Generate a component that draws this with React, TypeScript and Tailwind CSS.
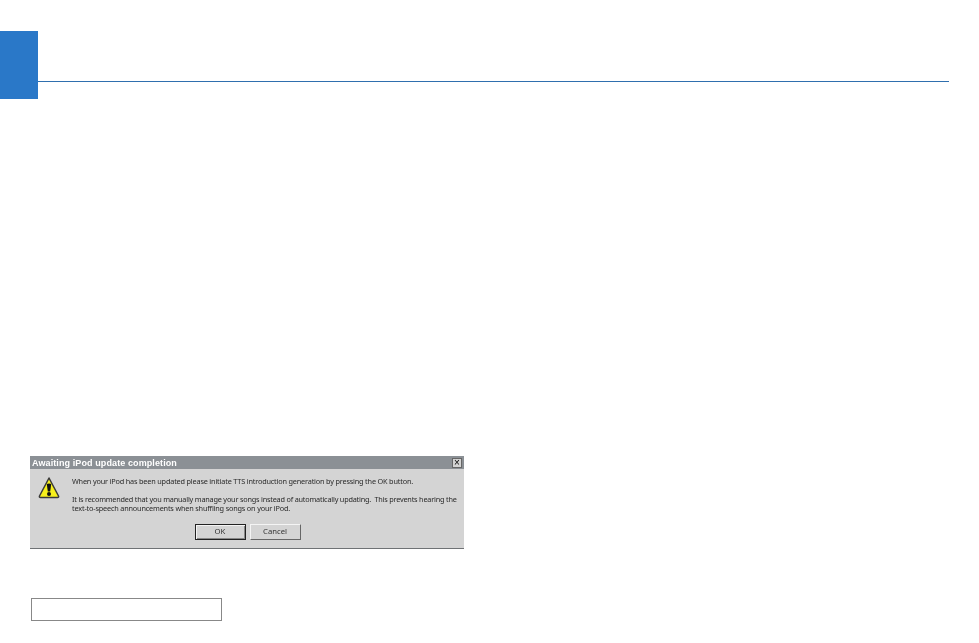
export default function App() {
  return (
    <div className="w-[979px] h-[643px] bg-white overflow-hidden font-['Liberation_Sans',sans-serif]">
      <header className="flex pt-[31px] pr-[30px]">
        <div className="w-[38px] h-[68px] bg-[#2a78c8]" />
        <div className="flex-1 h-px mt-[50px] bg-[#2f6fae]" />
      </header>
      <main className="pl-[30px] pt-[357px]">
        <section className="w-[434px] h-[93px] bg-[#d4d4d4] flex flex-col border-b border-[#6f7275] blur-[0.25px]">
          <div className="h-[13px] bg-[#8b9095] flex items-center justify-between pl-[2px] pr-[2px]">
            <span className="text-white text-[9px] font-bold leading-none tracking-[0.1px] pt-px">Awaiting iPod update completion</span>
            <span className="w-[10px] h-[10px] bg-[#d4d4d4] border border-[#666] flex items-center justify-center text-[10px] leading-none text-black">×</span>
          </div>
          <div className="flex pl-[8px] pr-[6px] pt-[7px]">
            <svg width="22" height="23" viewBox="0 0 22 23" className="shrink-0">
              <path d="M11 2 L20.5 20 Q21 21.5 19.5 21.5 L2.5 21.5 Q1 21.5 1.5 20 Z" fill="#f7f01c" stroke="#3a3a3a" strokeWidth="1.5" strokeLinejoin="round" />
              <path d="M8.8 8 Q11 6.8 13.2 8 L12.2 15.5 L9.8 15.5 Z" fill="#111" />
              <circle cx="11" cy="18" r="2" fill="#111" />
            </svg>
            <div className="ml-[12px] text-[7.3px] tracking-[-0.18px] leading-[9px] text-[#2a2a2a] font-['Noto_Sans',sans-serif] flex-1 pt-[1px]">
              <p className="whitespace-nowrap">When your iPod has been updated please initiate TTS introduction generation by pressing the OK button.</p>
              <p className="mt-[9px] whitespace-nowrap tracking-[-0.205px]">It is recommended that you manually manage your songs instead of automatically updating.&nbsp; This prevents hearing the</p>
              <p className="whitespace-nowrap">text-to-speech announcements when shuffling songs on your iPod.</p>
            </div>
          </div>
          <div className="flex justify-center gap-[4px] mt-[11px] pl-[1px]">
            <button className="w-[51px] h-[16px] bg-[#d4d4d4] border border-[#222] text-[7.7px] leading-none text-[#333] font-['Noto_Sans',sans-serif] shadow-[inset_1px_1px_0_#f4f4f4,inset_-1px_-1px_0_#888]">OK</button>
            <button className="w-[51px] h-[16px] bg-[#d4d4d4] border border-[#f4f4f4] border-r-[#666] border-b-[#666] text-[7.7px] leading-none text-[#333] font-['Noto_Sans',sans-serif]">Cancel</button>
          </div>
        </section>
        <div className="ml-px mt-[49px] w-[191px] h-[23px] border border-[#888888] bg-white" />
      </main>
    </div>
  );
}
